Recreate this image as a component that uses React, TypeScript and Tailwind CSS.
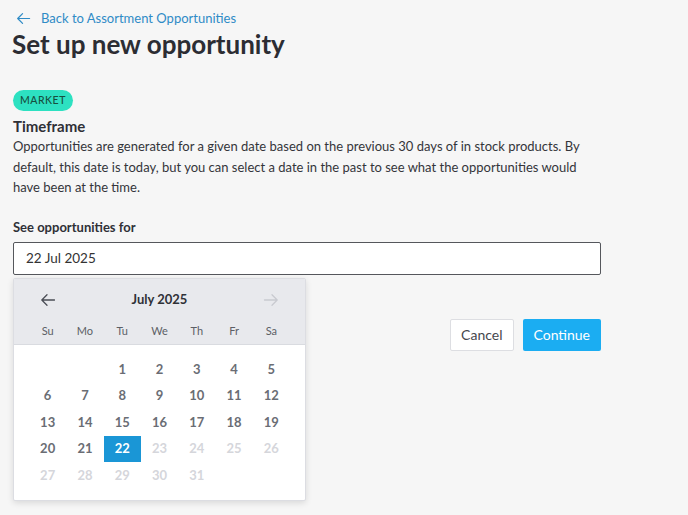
import React from 'react'

const weeks: (number | null)[][] = [
  [null, null, 1, 2, 3, 4, 5],
  [6, 7, 8, 9, 10, 11, 12],
  [13, 14, 15, 16, 17, 18, 19],
  [20, 21, 22, 23, 24, 25, 26],
  [27, 28, 29, 30, 31, null, null],
]

function ArrowLeft({ className = '' }: { className?: string }) {
  return (
    <svg viewBox="0 0 16 16" className={className} fill="none" stroke="currentColor" strokeWidth="1.3" strokeLinecap="round" strokeLinejoin="round">
      <path d="M14.5 8H1.8M7 2.8 1.8 8 7 13.2" />
    </svg>
  )
}

function ArrowRight({ className = '' }: { className?: string }) {
  return (
    <svg viewBox="0 0 16 16" className={className} fill="none" stroke="currentColor" strokeWidth="1.3" strokeLinecap="round" strokeLinejoin="round">
      <path d="M1.5 8h12.7M9 2.8 14.2 8 9 13.2" />
    </svg>
  )
}

function Calendar() {
  const days = ['Su', 'Mo', 'Tu', 'We', 'Th', 'Fr', 'Sa']
  return (
    <div className="absolute left-0 top-[36px] w-[293px] bg-white border border-[#dcdde2] shadow-[0_2px_6px_rgba(0,0,0,0.12)] rounded-[2px] overflow-hidden">
      <div className="bg-[#e8e9ed] border-b border-[#d9dbe0] px-[15px]">
        <div className="flex items-center justify-between h-[42px] px-[11px]">
          <ArrowLeft className="w-[16px] h-[16px] text-[#4a4d55]" />
          <span className="text-[13px] font-bold text-[#2f3137]">July 2025</span>
          <ArrowRight className="w-[16px] h-[16px] text-[#c8cad0]" />
        </div>
        <div className="grid grid-cols-7 h-[23px] pt-[2px] items-start">
          {days.map(d => (
            <div key={d} className="text-center text-[11px] text-[#5c5f66]">{d}</div>
          ))}
        </div>
      </div>
      <div className="px-[15px] pt-[12px] pb-[12px]">
        {weeks.map((w, i) => (
          <div key={i} className="grid grid-cols-7">
            {w.map((d, j) => {
              const selected = d === 22
              const disabled = d !== null && d > 22
              return (
                <div
                  key={j}
                  className={`h-[26.4px] flex items-center justify-center text-[13px] font-bold ${
                    selected ? 'bg-[#1a96d6] text-white' : disabled ? 'text-[#d5d6db]' : 'text-[#6a6d74]'
                  }`}
                >
                  {d ?? ''}
                </div>
              )
            })}
          </div>
        ))}
      </div>
    </div>
  )
}

export default function App() {
  return (
    <div className="min-h-screen bg-[#f6f6f6] font-['Lato',sans-serif] pl-[13px] pt-[10px] text-[#2f3036]">
      <div className="w-[588px]">
        <a className="flex items-center gap-[10px] text-[13px] text-[#2f8bc6] h-[17px] pl-[3px]">
          <ArrowLeft className="w-[15px] h-[15px]" />
          <span>Back to Assortment Opportunities</span>
        </a>
        <h1 className="text-[26px] font-bold leading-[30px] text-[#2c2d33] mt-[2px] -ml-[1px]">Set up new opportunity</h1>

        <div className="mt-[31px] inline-flex items-center h-[21px] px-[7px] rounded-full bg-[#2de1c1] text-[10.5px] font-medium tracking-[0.5px] text-[#17503f]">
          MARKET
        </div>
        <h2 className="text-[15px] font-bold mt-[5px] leading-[20px]">Timeframe</h2>
        <p className="text-[13px] leading-[20.5px] text-[#34353a] mt-[0px] w-[590px]">
          Opportunities are generated for a given date based on the previous 30 days of in stock products. By default, this date is today, but you can select a date in the past to see what the opportunities would have been at the time.
        </p>

        <div className="mt-[20px] text-[13px] font-bold leading-[18px]">See opportunities for</div>
        <div className="relative mt-[6px]">
          <div className="h-[33px] bg-white border border-[#55575c] rounded-[2px] flex items-center pl-[12px] text-[13.5px] text-[#333]">
            22 Jul 2025
          </div>
          <Calendar />
        </div>

        <div className="flex justify-end gap-[9px] mt-[44px]">
          <button className="h-[32px] px-[10px] bg-white border border-[#dddee2] rounded-[2px] text-[14px] text-[#45474d]">Cancel</button>
          <button className="h-[32px] px-[11px] bg-[#1badf2] rounded-[2px] text-[14px] text-white">Continue</button>
        </div>
      </div>
    </div>
  )
}
